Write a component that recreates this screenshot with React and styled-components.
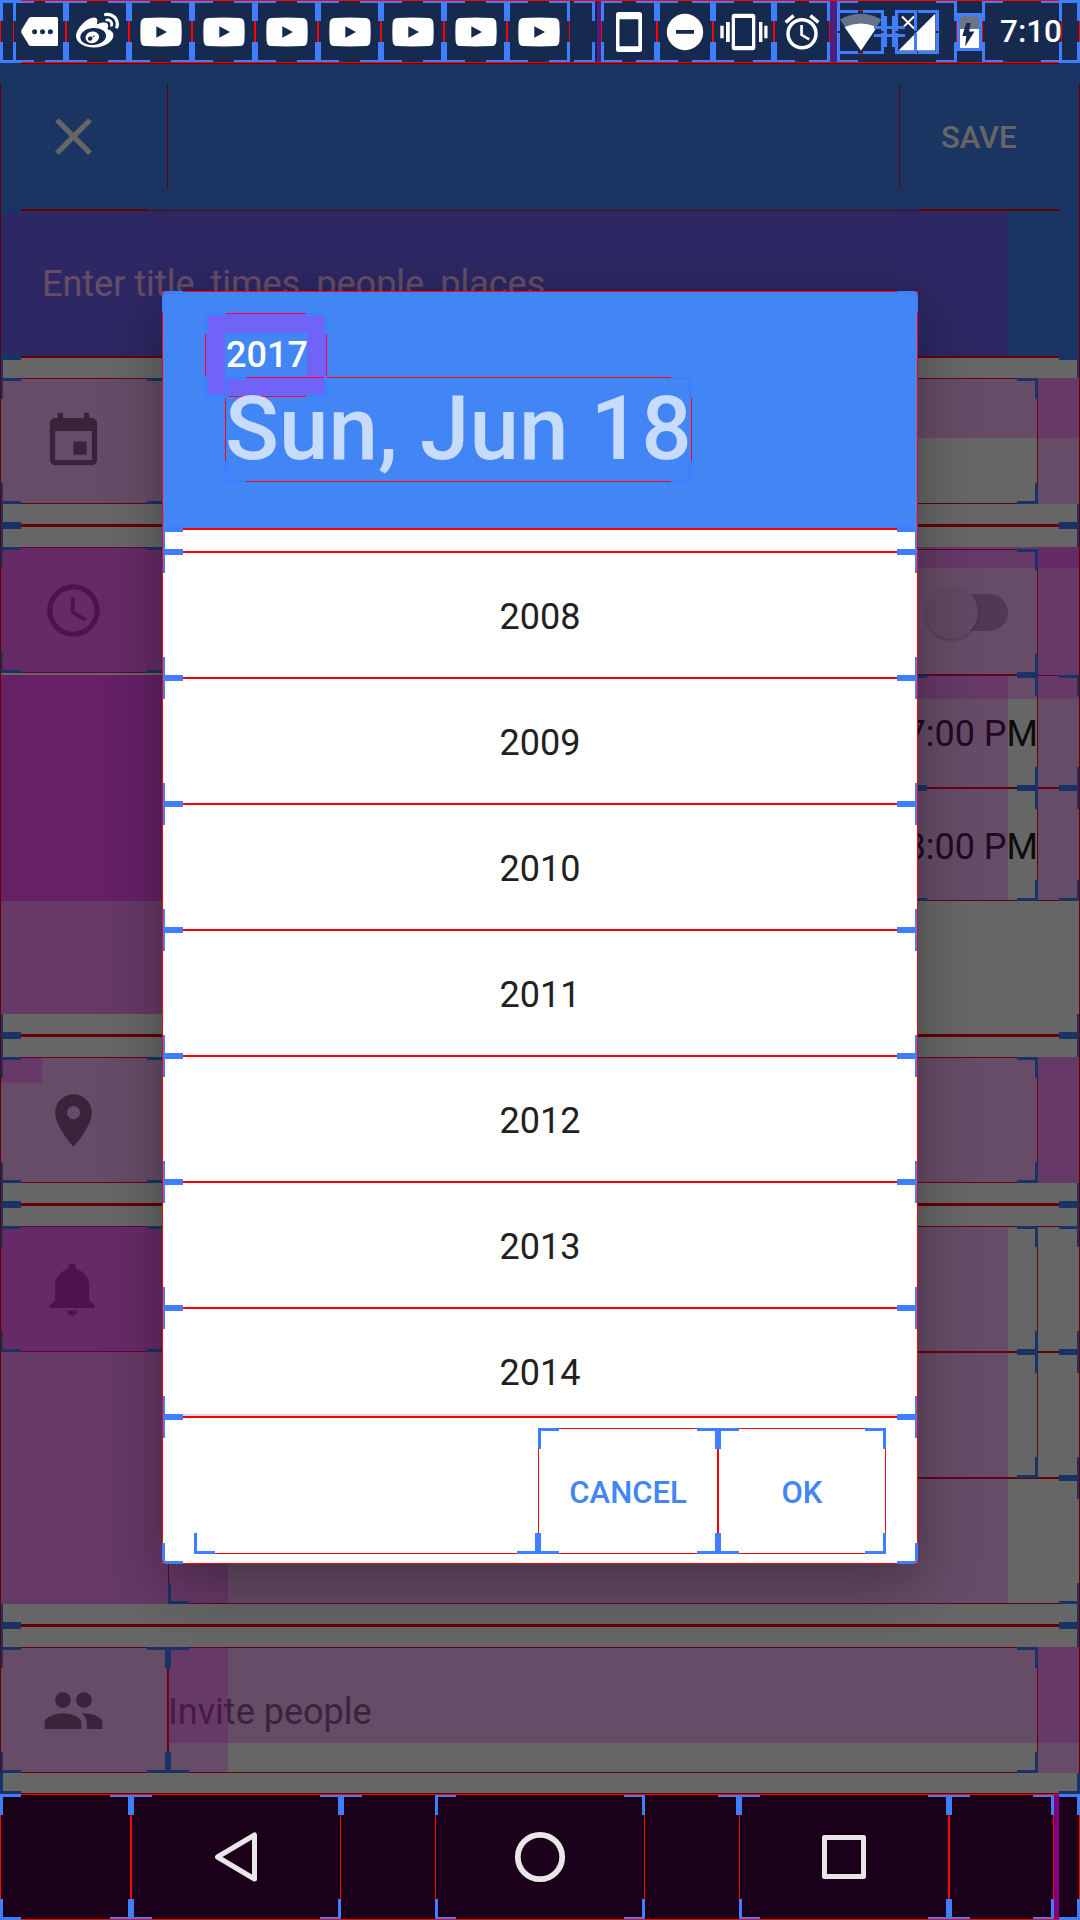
import React from "react";
import styled, { createGlobalStyle, css } from "styled-components";
import { MdClose, MdEvent, MdAccessTime, MdPlace, MdPeople, MdAccessAlarm } from "react-icons/md";
import { FaWeibo } from "react-icons/fa";

const BLUE = "#3f7fff";
const ACCENT = "#4285f4";
const STATUS_BG = "#16294f";

const Global = createGlobalStyle`
  * { box-sizing: border-box; }
  html, body { margin: 0; padding: 0; background: #666; }
  body { font-family: Roboto, "Noto Sans", sans-serif; }
`;

/* ---------- layout-bounds overlay ---------- */

const fill = `linear-gradient(${BLUE}, ${BLUE})`;
const cornerPositions = { tl: "left top", tr: "right top", bl: "left bottom", br: "right bottom" };

const cornerLayers = (names) =>
  names
    .flatMap((n) => [
      `${fill} ${cornerPositions[n]} / 21px 3px no-repeat`,
      `${fill} ${cornerPositions[n]} / 3px 21px no-repeat`,
    ])
    .join(", ");

const bounds = css`
  position: relative;
  &::before {
    content: "";
    position: absolute;
    inset: 0;
    border: ${(p) => (p.$line === false ? "0" : "1px solid #f00")};
    z-index: ${(p) => (p.$top ? 4 : 1)};
    pointer-events: none;
  }
  &::after {
    content: "";
    position: absolute;
    inset: 0;
    background: ${(p) => cornerLayers((p.$corners || "tl tr bl br").split(" "))};
    z-index: ${(p) => (p.$top ? 5 : 3)};
    pointer-events: none;
  }
`;

/* Tint drawn over a view's margins; $n is how many margins overlap. */
const Margin = styled.div`
  position: absolute;
  left: ${(p) => p.$x}px;
  top: ${(p) => p.$y}px;
  width: ${(p) => p.$w}px;
  height: ${(p) => p.$h}px;
  background: rgba(255, 0, 255, ${(p) => 1 - Math.pow(0.75, p.$n || 1)});
  z-index: 2;
`;

/* ---------- screen ---------- */

const Screen = styled.div`
  position: relative;
  width: 1080px;
  height: 1920px;
  overflow: hidden;
  display: flex;
  flex-direction: column;
`;

/* ---------- status bar ---------- */

const StatusBar = styled.header`
  ${bounds}
  isolation: isolate;
  display: flex;
  align-items: center;
  height: 63px;
  padding-left: 13px;
  background: ${STATUS_BG};
`;

const StatusCell = styled.div`
  ${bounds}
  flex: none;
  display: flex;
  align-items: center;
  justify-content: center;
  width: ${(p) => p.$w}px;
  height: ${(p) => p.$h || 63}px;
  color: #fff;
  svg { display: block; }
`;

const StatusGap = styled.div`
  flex: none;
  width: ${(p) => p.$w}px;
  height: 61px;
  background: ${(p) => (p.$tint ? "#501f7b" : "transparent")};
`;

const StatusTail = styled.div`
  ${bounds}
  flex: none;
  width: 25px;
  height: 63px;
`;

const Clock = styled.span`
  font-size: 31.5px;
  font-weight: 500;
  padding-left: 18px;
`;

const SignalGroup = styled(StatusCell)`
  justify-content: flex-start;
`;

const SignalBox = styled.div`
  ${bounds}
  flex: none;
  width: 47px;
  height: 44px;
`;

const SimBox = styled(SignalBox)`
  width: 44px;
`;

const SimHalf = styled.div`
  ${bounds}
  position: absolute;
  left: 0;
  top: 0;
  width: 22px;
  height: 44px;
`;

const TinyBox = styled.div`
  position: relative;
  flex: none;
  width: 11px;
  height: 11px;
  &::before, &::after {
    content: "";
    position: absolute;
    z-index: 3;
  }
  &::before {
    left: -10px;
    right: -10px;
    top: 0;
    bottom: 0;
    border: solid ${BLUE};
    border-width: 3px 0;
  }
  &::after {
    top: -10px;
    bottom: -10px;
    left: 0;
    right: 0;
    border: solid ${BLUE};
    border-width: 0 3px;
  }
`;

const Art = ({ x, w, y = 0, h = 63, children }) => (
  <svg width={w} height={h} viewBox={`${x} ${y} ${w} ${h}`}>{children}</svg>
);

const YouTubeIcon = () => (
  <svg width="42" height="30" viewBox="0 0 42 30">
    <path fill="#fff" d="M5 .9Q21 0 37 .9Q41 1.2 41.4 6Q42 15 41.4 24Q41 28.8 37 29.1Q21 30 5 29.1Q1 28.8.6 24Q0 15 .6 6Q1 1.2 5 .9Z" />
    <path fill={STATUS_BG} d="M16.3 9.2v11.600L27 15z" />
  </svg>
);

/* ---------- event editor ---------- */

const Editor = styled.main`
  ${bounds}
  isolation: isolate;
  height: 1731px;
  background: #fff;
  display: flex;
  flex-direction: column;
`;

const Scrim = styled.div`
  position: absolute;
  inset: 0;
  z-index: 6;
  background: rgba(0, 0, 0, 0.6);
`;

const Toolbar = styled.div`
  display: flex;
  justify-content: space-between;
  height: 147px;
  background: ${ACCENT};
`;

const CloseButton = styled.div`
  ${bounds}
  display: flex;
  align-items: center;
  width: 168px;
  padding-left: 42px;
  color: #fff;
`;

const SaveButton = styled.div`
  ${bounds}
  display: flex;
  align-items: center;
  width: 181px;
  padding-left: 42px;
  padding-top: 2px;
  color: #fff;
  font-size: 31px;
  font-weight: 500;
`;

const TitleBar = styled.div`
  ${bounds}
  display: flex;
  align-items: center;
  height: 147px;
  padding-left: 42px;
  background: ${ACCENT};
  color: #fff;
  font-size: 36px;
`;

const Section = styled.section`
  ${bounds}
  display: flex;
  flex: none;
  height: ${(p) => p.$h}px;
  padding: 21px 0;
`;

const Divider = styled.div`
  position: relative;
  z-index: 3;
  flex: none;
  height: 1px;
  background: linear-gradient(90deg, ${BLUE} 21px, #f00 21px, #f00 1059px, ${BLUE} 1059px);
`;

const IconCell = styled.div`
  ${bounds}
  flex: none;
  display: flex;
  align-items: center;
  width: 168px;
  height: 126px;
  padding-left: 42px;
  color: #757575;
`;

const Column = styled.div`
  flex: 1;
  display: flex;
  flex-direction: column;
  padding-top: ${(p) => p.$pt || 0}px;
`;

const Field = styled.div`
  ${bounds}
  flex: none;
  display: flex;
  align-items: center;
  width: 870px;
  height: 126px;
  color: #757575;
  font-size: 36px;
`;

const FieldText = styled.span`
  padding-top: 3px;
`;

const SwitchField = styled(Field)`
  justify-content: flex-end;
  padding-right: 30px;
`;

const Track = styled.div`
  position: relative;
  width: 83px;
  height: 37px;
  border-radius: 19px;
  background: #bdbdbd;
`;

const Thumb = styled.div`
  position: absolute;
  left: 0;
  top: -8px;
  width: 53px;
  height: 53px;
  border-radius: 50%;
  background: #f1f1f1;
  box-shadow: 0 2px 3px rgba(0, 0, 0, 0.25);
`;

const TimeRow = styled.div`
  ${bounds}
  display: flex;
  width: 912px;
  height: 113px;
`;

const DateCell = styled.div`
  ${bounds}
  flex: none;
  width: 738px;
`;

const TimeCell = styled.div`
  ${bounds}
  flex: none;
  display: flex;
  align-items: center;
  justify-content: flex-end;
  width: 132px;
  padding-top: 4px;
  color: #212121;
  font-size: 36px;
  white-space: nowrap;
`;

const FullRow = styled.div`
  ${bounds}
  width: 912px;
  height: 126px;
`;

/* ---------- year dialog ---------- */

const Dialog = styled.div`
  ${bounds}
  position: absolute;
  left: 162px;
  top: 291px;
  z-index: 10;
  isolation: isolate;
  width: 756px;
  height: 1273px;
  display: flex;
  flex-direction: column;
  background: #fff;
  border-radius: 5px;
  box-shadow: 0 24px 60px rgba(0, 0, 0, 0.28), 0 0 24px rgba(0, 0, 0, 0.06);
  &::after { border-radius: 5px; }
`;

const DialogHeader = styled.div`
  ${bounds}
  flex: none;
  display: flex;
  flex-direction: column;
  align-items: flex-start;
  height: 238px;
  padding: 22px 0 0 43px;
  border-radius: 5px 5px 0 0;
  background: ${ACCENT};
  &::after { border-radius: 5px 5px 0 0; }
`;

const YearLabel = styled.div`
  ${bounds}
  width: 122px;
  height: 84px;
  margin-bottom: -20px;
  padding-left: 21px;
  padding-top: 20px;
  color: #fff;
  font-size: 36px;
  font-weight: 500;
  line-height: 45px;
`;

const DateLabel = styled.div`
  ${bounds}
  width: 467px;
  height: 105px;
  margin-left: 20px;
  font-size: 89px;
  font-weight: 500;
  line-height: 104px;
  white-space: nowrap;
`;

const DateText = styled.span`
  position: relative;
  z-index: 3;
  color: #c7dbfc;
`;

const YearList = styled.div`
  ${bounds}
  flex: none;
  display: flex;
  flex-direction: column;
  height: 888px;
  overflow: hidden;
`;

const ListPadding = styled.div`
  ${bounds}
  flex: none;
  height: 23px;
`;

const ListEdge = styled.div`
  position: absolute;
  left: 0;
  right: 0;
  bottom: 1px;
  height: 2px;
  background: #d9d9d9;
`;

const Year = styled.div`
  ${bounds}
  flex: none;
  display: flex;
  align-items: center;
  justify-content: center;
  height: 126px;
  padding-top: 3px;
  color: #212121;
  font-size: 36px;
`;

const ButtonBar = styled.div`
  ${bounds}
  flex: 1;
  display: flex;
  padding: 11px 32px 10px;
`;

const ButtonSpacer = styled.div`
  ${bounds}
  width: 344px;
  &::before { border-width: 0 0 1px; }
`;

const DialogButton = styled.div`
  ${bounds}
  display: flex;
  align-items: center;
  justify-content: center;
  width: ${(p) => p.$w}px;
  padding-top: 3px;
  color: ${ACCENT};
  font-size: 31px;
  font-weight: 500;
`;

/* ---------- navigation bar ---------- */

const NavBar = styled.nav`
  ${bounds}
  isolation: isolate;
  display: flex;
  height: 126px;
  background: #1a0018;
`;

const NavCell = styled.div`
  ${bounds}
  flex: none;
  display: flex;
  align-items: center;
  justify-content: center;
  width: ${(p) => p.$w}px;
  height: 126px;
`;

const HomeCell = styled(NavCell)`
  margin-right: 10px;
  margin-left: 0;
`;

const NavMargin = styled.div`
  width: 5px;
  height: 126px;
  background: #7f007f;
`;

const NavIcon = ({ children }) => (
  <svg width="60" height="60" viewBox="-30 -30 60 60" fill="none" stroke="#e8e6e8" strokeWidth="5" strokeLinejoin="round">
    {children}
  </svg>
);

const BellIcon = () => (
  <svg width="63" height="63" viewBox="0 0 24 24" fill="currentColor">
    <path d="M11.5 22c1.1 0 2-.9 2-2h-4c0 1.1.9 2 2 2zm6.5-6v-5.5c0-3.07-2.13-5.64-5-6.32V3.5c0-.83-.67-1.5-1.5-1.5S10 2.67 10 3.5v.68c-2.87.68-5 3.25-5 6.32V16l-2 2v1h17v-1l-2-2z" />
  </svg>
);

const YEARS = [2008, 2009, 2010, 2011, 2012, 2013, 2014];

function Status() {
  return (
    <StatusBar $top>
      <StatusCell $w={53}>
        <Art x={13} w={53}>
          <path fill="#fff" d="M31 17H56.500Q58 17 58 18.500V44.500Q58 46 56.500 46H31Q29.500 46 28.500 44.500L21.500 33Q21 31.500 21.500 30L28.500 18.500Q29.500 17 31 17Z" />
          {[34.6, 42.5, 50.4].map((cx) => <circle key={cx} cx={cx} cy="31.700" r="2.500" fill={STATUS_BG} />)}
        </Art>
      </StatusCell>
      <StatusCell $w={63}><FaWeibo size={43} /></StatusCell>
      {[0, 1, 2, 3, 4, 5, 6].map((i) => (
        <StatusCell key={i} $w={63}><YouTubeIcon /></StatusCell>
      ))}
      <StatusTail $corners="tr br" $line={false} />
      <StatusGap $w={2} />
      <StatusGap $w={4} $tint />
      <StatusCell $w={56}>
        <Art x={601} w={56}>
          <path fill="#fff" fillRule="evenodd" d="M618.500 12h21q2.500 0 2.500 2.500v35q0 2.500-2.500 2.500h-21q-2.500 0-2.500-2.500v-35q0-2.500 2.500-2.500zM619.500 19.300v27H638.300v-27z" />
        </Art>
      </StatusCell>
      <StatusCell $w={56}>
        <Art x={657} w={56}>
          <circle cx="685" cy="32" r="18.200" fill="#fff" />
          <rect x="676" y="30" width="18" height="3.800" fill={STATUS_BG} />
        </Art>
      </StatusCell>
      <StatusCell $w={61}>
        <Art x={713} w={61}>
          <g fill="#fff">
            <path fillRule="evenodd" d="M734.500 13.700h18q2.800 0 2.800 2.800v31q0 2.800-2.800 2.800h-18q-2.800 0-2.800-2.800v-31q0-2.800 2.800-2.800zM735 18v28h17V18z" />
            <rect x="726" y="22" width="3.800" height="20" />
            <rect x="720.300" y="25.700" width="3.400" height="12.600" />
            <rect x="759" y="22" width="3.400" height="20" />
            <rect x="764.300" y="25.700" width="3.200" height="12.600" />
          </g>
        </Art>
      </StatusCell>
      <StatusCell $w={56}><MdAccessAlarm size={42} /></StatusCell>
      <StatusGap $w={7} $tint />
      <SignalGroup $w={120}>
        <SignalBox>
          <Art x={837} w={47} y={9} h={44}>
            <path fill="#667287" d="M840 18.500Q860.500 7 881.500 18.500L861 49.500z" />
            <path fill="#fff" d="M844.500 26Q860.500 19 877 26L861 49.500z" />
          </Art>
        </SignalBox>
        <TinyBox />
        <SimBox>
          <Art x={895} w={44} y={9} h={44}>
            <path fill="#fff" d="M898.500 49.500L935.300 12.500V49.500z" />
            <path fill={STATUS_BG} d="M898 12h17v18h-17z" />
            <path stroke="#fff" strokeWidth="2" d="M902 15.500L914 27.500M914 15.500L902 27.500" />
          </Art>
          <SimHalf $line={false} $corners="tr br" />
        </SimBox>
      </SignalGroup>
      <StatusCell $w={25} $h={38}>
        <Art x={957} w={25} y={12} h={38}>
          <path fill="#6a758a" d="M960 15h19.500v14H960z" />
          <path fill="#fff" d="M960 28h19.500V47.500H960z" />
          <path fill={STATUS_BG} d="M966.300 22h4.500l-1.600 8.500h5.300L965 45.500l1.300-10.500h-4z" />
        </Art>
      </StatusCell>
      <StatusCell $w={80}><Clock>7:10</Clock></StatusCell>
    </StatusBar>
  );
}

export default function App() {
  return (
    <>
      <Global />
      <Screen>
        <Status />
        <Editor $top>
          <Toolbar>
            <CloseButton><MdClose size={63} /></CloseButton>
            <SaveButton>SAVE</SaveButton>
          </Toolbar>
          <TitleBar>
            Enter title, times, people, places
            <Margin $x={0} $y={1} $w={1008} $h={146} />
          </TitleBar>

          <Section $h={168}>
            <IconCell><MdEvent size={63} /></IconCell>
            <Field />
            <Margin $x={0} $y={21} $w={168} $h={126} />
            <Margin $x={168} $y={21} $w={912} $h={60} />
            <Margin $x={1038} $y={21} $w={42} $h={126} />
          </Section>
          <Divider />

          <Section $h={509}>
            <IconCell><MdAccessTime size={63} /></IconCell>
            <Column $pt={2}>
              <SwitchField><Track><Thumb /></Track></SwitchField>
              {["7:00 PM", "8:00 PM"].map((t) => (
                <TimeRow key={t}>
                  <DateCell />
                  <TimeCell>{t}</TimeCell>
                </TimeRow>
              ))}
            </Column>
            <Margin $x={0} $y={21} $w={168} $h={126} $n={3} />
            <Margin $x={0} $y={149} $w={168} $h={226} $n={4} />
            <Margin $x={0} $y={375} $w={168} $h={113} $n={2} />
            <Margin $x={168} $y={21} $w={912} $h={21} />
            <Margin $x={168} $y={21} $w={912} $h={128} />
            <Margin $x={1038} $y={21} $w={42} $h={128} />
            <Margin $x={168} $y={149} $w={870} $h={24} />
            <Margin $x={1038} $y={149} $w={42} $h={24} />
            <Margin $x={168} $y={149} $w={840} $h={226} />
            <Margin $x={1038} $y={149} $w={42} $h={226} />
          </Section>
          <Divider />

          <Section $h={168}>
            <IconCell><MdPlace size={63} /></IconCell>
            <Field />
            <Margin $x={0} $y={21} $w={1080} $h={126} />
            <Margin $x={0} $y={21} $w={42} $h={26} />
            <Margin $x={1038} $y={21} $w={42} $h={126} />
          </Section>
          <Divider />

          <Section $h={420}>
            <IconCell><BellIcon /></IconCell>
            <Column>
              <FullRow><Field /></FullRow>
              <FullRow><Field /></FullRow>
              <FullRow />
            </Column>
            <Margin $x={0} $y={21} $w={168} $h={126} $n={3} />
            <Margin $x={0} $y={147} $w={168} $h={252} $n={2} />
            <Margin $x={168} $y={21} $w={840} $h={378} />
            <Margin $x={168} $y={273} $w={60} $h={126} />
          </Section>
          <Divider />

          <Section $h={168}>
            <IconCell><MdPeople size={63} /></IconCell>
            <Field><FieldText>Invite people</FieldText></Field>
            <Margin $x={0} $y={21} $w={168} $h={126} />
            <Margin $x={168} $y={21} $w={912} $h={96} />
            <Margin $x={168} $y={21} $w={60} $h={126} />
            <Margin $x={1038} $y={21} $w={42} $h={126} />
          </Section>
          <Scrim />
        </Editor>

        <NavBar $top>
          <NavCell $w={131} />
          <NavCell $w={210}>
            <NavIcon><path d="M-18.500 0L18.500 -22V22z" /></NavIcon>
          </NavCell>
          <NavCell $w={398} $line={false} $corners="tl tr">
            <NavCell $w={210}>
              <NavIcon><circle r="22.200" strokeWidth="5.800" /></NavIcon>
            </NavCell>
          </NavCell>
          <NavCell $w={210}>
            <NavIcon><rect x="-19.500" y="-19.500" width="39" height="39" /></NavIcon>
          </NavCell>
          <NavCell $w={105} />
          <NavMargin />
        </NavBar>

        <Dialog $top>
          <DialogHeader>
            <YearLabel>
              2017
              <Margin $x={0} $y={0} $w={122} $h={20} />
              <Margin $x={0} $y={20} $w={20} $h={64} />
              <Margin $x={102} $y={20} $w={20} $h={64} />
              <Margin $x={20} $y={64} $w={82} $h={20} />
            </YearLabel>
            <DateLabel><DateText>Sun, Jun 18</DateText></DateLabel>
          </DialogHeader>
          <YearList>
            <ListPadding />
            {YEARS.map((y) => <Year key={y}>{y}</Year>)}
            <ListEdge />
          </YearList>
          <ButtonBar>
            <ButtonSpacer $corners="bl br" />
            <DialogButton $w={180}>CANCEL</DialogButton>
            <DialogButton $w={168}>OK</DialogButton>
          </ButtonBar>
        </Dialog>
      </Screen>
    </>
  );
}
